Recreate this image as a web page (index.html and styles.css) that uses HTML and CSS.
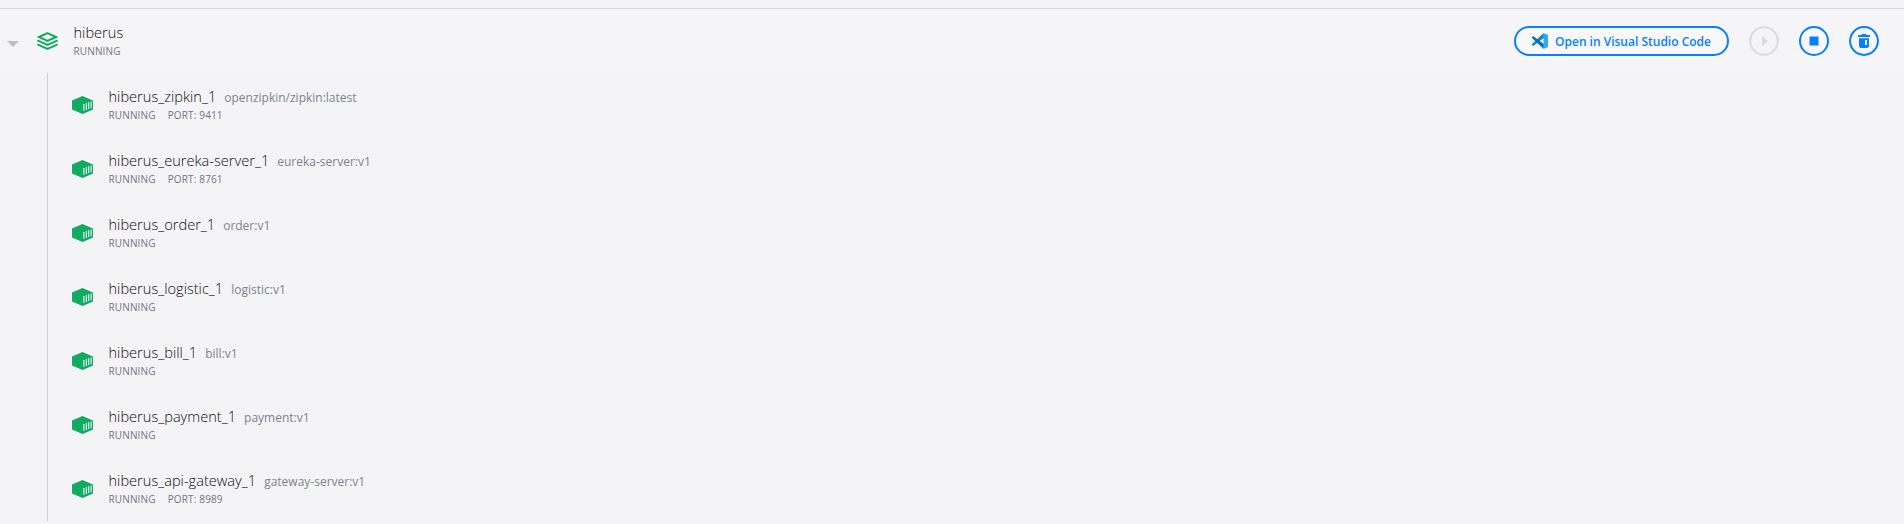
FILE: index.html
```html
<!DOCTYPE html>
<html lang="en">
<head>
<meta charset="utf-8">
<title>Containers</title>
<link rel="stylesheet" href="styles.css">
</head>
<body>
<svg class="defs" width="0" height="0">
  <symbol id="box" viewBox="0 0 21 18">
    <path fill="#13aa62" d="M10.5 0 20.5 4.3Q21 4.5 21 5V13Q21 13.5 20.5 13.7L10.5 18 .5 13.7Q0 13.5 0 13V5Q0 4.500 .5 4.300Z"/>
    <path stroke="#f4f4f6" stroke-width="1.100" d="M11.900 8v6.700M14.300 7.300v6.600M16.700 6.300v6.600M19.100 5.400v6.500"/>
  </symbol>
</svg>
<main>
  <header class="group">
    <svg class="caret" width="12" height="6" viewBox="0 0 12 6"><path fill="#c0c0c0" d="M0 0h12L6 6z"/></svg>
    <svg class="stack" width="21" height="18" viewBox="0 0 21 18" fill="none" stroke="#13aa62" stroke-width="2">
      <path d="M10.500 1.100 19 5 10.500 8.900 2 5Z"/><path d="M.3 8.400 10.500 12.900 20.700 8.400M.3 12.400 10.500 16.900 20.700 12.400"/>
    </svg>
    <div class="info">
      <div class="title"><span class="name">hiberus</span></div>
      <div class="status"><span>RUNNING</span></div>
    </div>
    <div class="actions">
      <button class="open">
        <svg width="16" height="16" viewBox="0 0 16 16"><path fill="#0f86c8" d="M11.700 0 0 10.900v1l1.200 1L12 4.700z"/><path fill="#0873ad" d="M11.700 16 0 5.100v-1l1.200-1L12 11.300z"/><path fill="#2aaaf0" d="M11.500 0 16 2v12l-4.500 2z"/></svg>
        <span>Open in Visual Studio Code</span>
      </button>
      <button class="round off"><svg width="30" height="30" viewBox="0 0 30 30"><circle cx="15" cy="15" r="13.800"/><path d="M13 9.500 18.800 15 13 20.500z"/></svg></button>
      <button class="round"><svg width="30" height="30" viewBox="0 0 30 30"><circle cx="15" cy="15" r="14"/><path d="M10.500 10.500h9v9h-9z"/></svg></button>
      <button class="round"><svg width="30" height="30" viewBox="0 0 30 30"><circle cx="15" cy="15" r="13.900"/><path fill-rule="evenodd" d="M9 9h3.700V8h4.600v1H21v2H9zM10 12.300h10V20q0 2-2 2h-6q-2 0-2-2zM16 14v5h2v-5z"/></svg></button>
    </div>
  </header>
  <ul class="containers">
    <li><svg width="21" height="18"><use href="#box"/></svg><div class="info"><div class="title"><span class="name">hiberus_zipkin_1</span><span class="image">openzipkin/zipkin:latest</span></div><div class="status"><span>RUNNING</span><span>PORT: 9411</span></div></div></li>
    <li><svg width="21" height="18"><use href="#box"/></svg><div class="info"><div class="title"><span class="name">hiberus_eureka-server_1</span><span class="image">eureka-server:v1</span></div><div class="status"><span>RUNNING</span><span>PORT: 8761</span></div></div></li>
    <li><svg width="21" height="18"><use href="#box"/></svg><div class="info"><div class="title"><span class="name">hiberus_order_1</span><span class="image">order:v1</span></div><div class="status"><span>RUNNING</span></div></div></li>
    <li><svg width="21" height="18"><use href="#box"/></svg><div class="info"><div class="title"><span class="name">hiberus_logistic_1</span><span class="image">logistic:v1</span></div><div class="status"><span>RUNNING</span></div></div></li>
    <li><svg width="21" height="18"><use href="#box"/></svg><div class="info"><div class="title"><span class="name">hiberus_bill_1</span><span class="image">bill:v1</span></div><div class="status"><span>RUNNING</span></div></div></li>
    <li><svg width="21" height="18"><use href="#box"/></svg><div class="info"><div class="title"><span class="name">hiberus_payment_1</span><span class="image">payment:v1</span></div><div class="status"><span>RUNNING</span></div></div></li>
    <li><svg width="21" height="18"><use href="#box"/></svg><div class="info"><div class="title"><span class="name">hiberus_api-gateway_1</span><span class="image">gateway-server:v1</span></div><div class="status"><span>RUNNING</span><span>PORT: 8989</span></div></div></li>
  </ul>
</main>
</body>
</html>
```
FILE: styles.css
```css
* { box-sizing: border-box; }
body { margin: 0; padding-top: 8px; height: 524px; overflow: hidden; background: #f4f4f6; color: #0c0c0e; font-family: "Open Sans", sans-serif; }
.defs { display: none; }
.group { display: flex; height: 65px; border-top: 1px solid #d3d4d7; background: #f5f5f8; padding: 0 25px 0 7px; }
.caret { margin-top: 32px; }
.stack { margin: 23px 15.500px 0 18px; }
.info { padding-top: 13px; white-space: nowrap; }
.title { display: flex; align-items: baseline; height: 21px; line-height: 21px; gap: 8px; }
.name { font-size: 14.600px; font-weight: 300; }
.image { font-size: 12px; color: #7d8488; }
.status { display: flex; gap: 12px; height: 16px; line-height: 16px; font-size: 10px; letter-spacing: .15px; color: #717780; }
.actions { display: flex; margin: 17px 0 0 auto; }
.actions button { padding: 0; font-family: inherit; }
.open { display: flex; align-items: center; justify-content: center; gap: 7px; width: 215px; height: 30px; margin-right: 20px; border: 2px solid #087fff; border-radius: 15px; background: #f8f8fb; color: #087fff; font-size: 12px; font-weight: 600; }
.round { display: block; width: 30px; height: 30px; margin-left: 20px; border: 0; background: none; color: #087fff; }
.open + .round { margin-left: 0; }
.round.off { color: #dcdcdc; }
.round svg { display: block; fill: currentColor; }
.round circle { fill: #f8f8fb; stroke: currentColor; stroke-width: 2; }
.round.off circle { fill: none; }
.containers { list-style: none; margin: 0 0 0 47px; padding: 0; border-left: 1px solid #d0d1d3; }
.containers li { display: flex; height: 64px; padding-left: 24px; }
.containers svg { margin: 23px 15px 0 0; }
.containers .info { padding-left: .5px; }
```
